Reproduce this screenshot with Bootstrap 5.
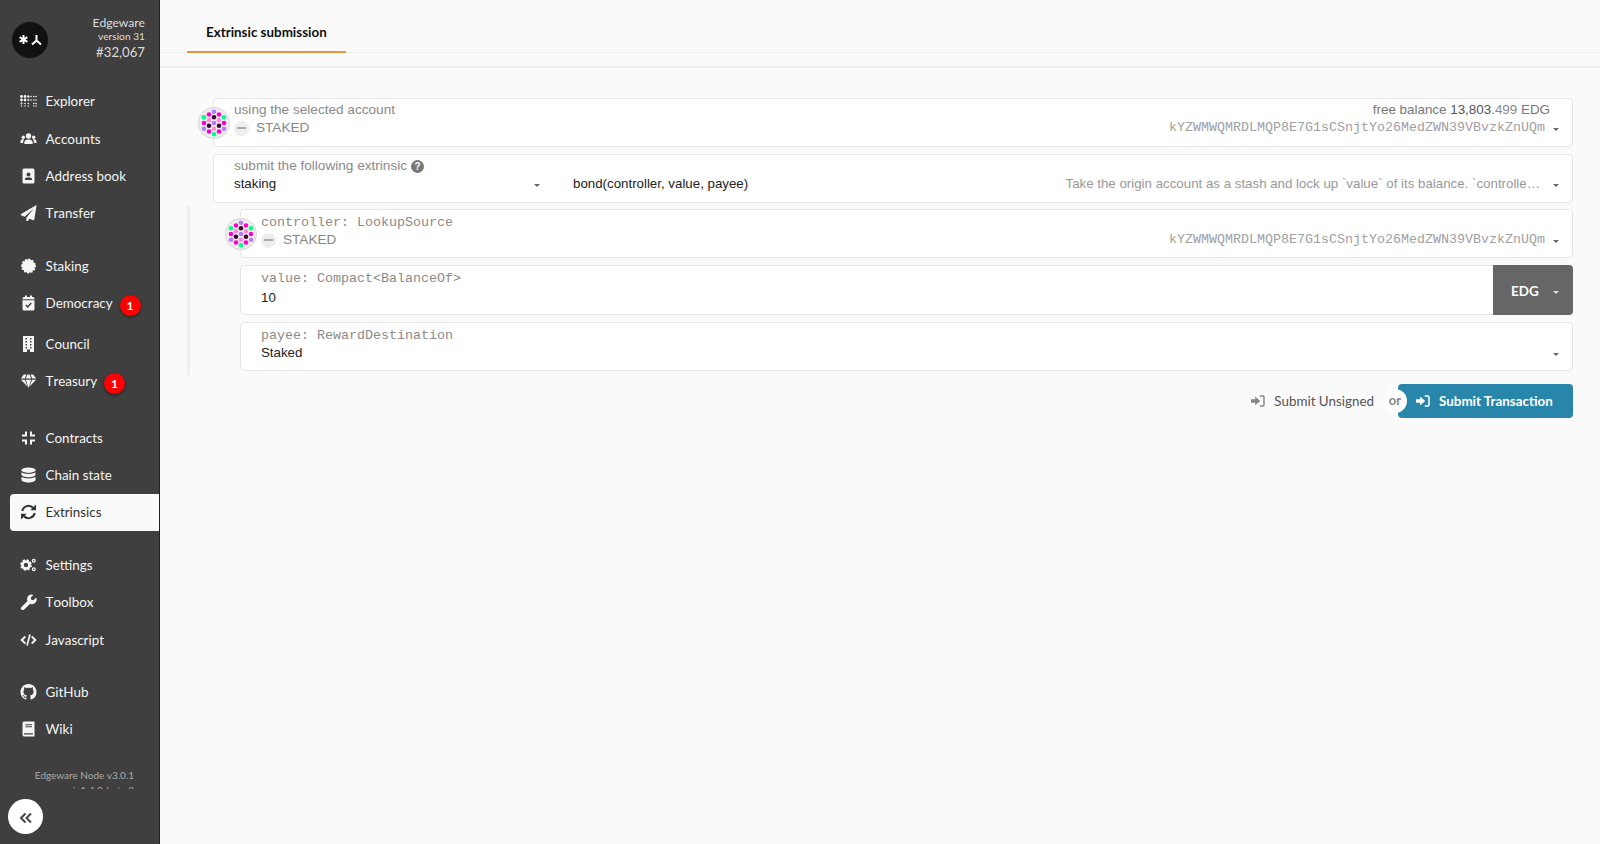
<!DOCTYPE html>
<html lang="en">
<head>
    <meta charset="UTF-8">
    <title>Extrinsics</title>
    <link href="https://cdn.jsdelivr.net/npm/bootstrap@5.3.0/dist/css/bootstrap.min.css" rel="stylesheet">
    <style>
        body {
            background: #fafafa;
            font-family: "Liberation Sans", Arial, sans-serif;
            font-size: 14px;
            color: #222;
        }
        .app-shell { height: 844px; overflow: hidden; }

        /* side menu */
        .side-menu {
            width: 160px;
            flex: 0 0 160px;
            background: #3f3f3f;
            border-right: 1px solid #222;
            font-family: Lato, sans-serif;
            color: #f5f5f5;
        }
        .side-scroll { height: 789px; overflow: hidden; }
        .chain-head { height: 82.6px; padding: 16px 14px 0 12px; }
        .chain-logo { width: 36px; height: 36px; margin-top: 6px; }
        .chain-info { line-height: 1; text-align: right; color: #ddd; }
        .chain-name { font-size: 12.2px; margin-top: 1px; }
        .chain-ver { font-size: 10.2px; margin-top: 2px; }
        .chain-block { font-size: 13.2px; margin-top: 5px; }
        .menu-link {
            height: 37.4px;
            padding: 0 0 0 20px;
            color: #f5f5f5;
            font-size: 13.4px;
            font-kerning: none;
            display: flex;
            align-items: center;
        }
        .menu-link:hover { color: #fff; }
        .menu-link.with-count { height: 41px; padding-bottom: 4px; }
        .menu-link.is-active {
            background: #fafafa;
            color: #333;
            margin-left: 10px;
            margin-right: -1px;
            padding-left: 10px;
            border-radius: 4px 0 0 4px;
        }
        .menu-gap { height: 15px; }
        .menu-icon { width: 17px; height: 16px; margin-right: 8.5px; flex: none; fill: currentColor; }
        .count-dot {
            width: 21px;
            height: 21px;
            margin: 4px 0 0 7px;
            border-radius: 50%;
            background: #f00;
            color: #fff;
            font-size: 12px;
            font-weight: 700;
            line-height: 21px;
            text-align: center;
            box-shadow: 0 1px 3px rgba(0,0,0,.5);
        }
        .node-info {
            padding: 20px 25px 0 0;
            font-size: 10px;
            line-height: 15px;
            text-align: right;
            color: #aaa;
        }
        .collapse-btn {
            width: 35px;
            height: 35px;
            margin: 10px 0 0 8px;
            padding: 0;
            border: 0;
            border-radius: 50%;
            background: #fff;
        }

        /* tab strip */
        .tab-strip { height: 53px; background: #fafafa; border-bottom: 1px solid #eee; padding-left: 27px; }
        .tab-item {
            width: 159px;
            height: 53px;
            padding: 23px 0 0 19px;
            border-bottom: 2px solid #f19135;
            font-family: Lato, sans-serif;
            font-size: 13.4px;
            font-weight: 700;
            line-height: 18px;
            color: #111;
        }
        .tab-sub { height: 15px; border-bottom: 2px solid #eee; }

        /* form */
        .form-area { padding: 30px 27px 0 27px; }
        .top-fields { margin-left: 26px; gap: 7px; }
        .nested-fields {
            margin-top: 3px;
            padding: 3px 0 4px 50px;
            border-left: 3px solid #f0f0f0;
            gap: 7px;
        }
        .field-box {
            position: relative;
            height: 49px;
            padding: 2px 13px 0 20px;
            background: #fff;
            border: 1px solid #e6e6e6;
            border-radius: 4px;
            line-height: 18px;
        }
        .field-box.tall { height: 50px; }
        .field-box.pad-five { padding-top: 5px; }
        .field-label { font-size: 13.6px; color: #8a8a8a; }
        .mono-label { font-family: "Liberation Mono", monospace; font-size: 13.33px; line-height: 16px; color: #8a8a8a; }
        .mono-addr { font-family: "Liberation Mono", monospace; font-size: 13.33px; color: #a0a0a0; }
        .field-value { font-size: 13.3px; color: #222; }
        .amount-line { margin-top: 2px; }
        .state-text { font-size: 13.6px; color: #888; margin-left: 7px; }
        .balance-line { font-size: 13.4px; color: #777; padding-right: 9px; }
        .balance-line b { font-weight: 400; color: #555; }
        .balance-line i { font-style: normal; color: #888; }
        .id-icon { position: absolute; left: -16px; top: 7.5px; width: 32px; height: 32px; }
        .minus-dot {
            width: 15px;
            height: 15px;
            border-radius: 50%;
            background: #eee;
            position: relative;
        }
        .minus-dot::after {
            content: "";
            position: absolute;
            left: 3px;
            top: 6.5px;
            width: 9px;
            height: 2px;
            background: #aaa;
        }
        .drop-tri {
            width: 0;
            height: 0;
            margin-top: 3px;
            border-left: 3.5px solid transparent;
            border-right: 3.5px solid transparent;
            border-top: 3.5px solid #666;
            flex: none;
        }
        .help-dot {
            width: 13px;
            height: 13px;
            margin-left: 4px;
            border-radius: 50%;
            background: #777;
            color: #fff;
            font-size: 10px;
            font-weight: 700;
            line-height: 13px;
            text-align: center;
        }
        .module-col { width: 306px; }
        .method-col { margin-left: 33px; }
        .desc-text { color: #999; font-size: 13.3px; margin-right: 13px; }
        .unit-btn {
            position: absolute;
            right: -1px;
            top: -1px;
            bottom: -1px;
            width: 80px;
            padding: 2px 0 0 18px;
            background: #666;
            border-radius: 0 4px 4px 0;
            color: #fff;
            font-family: Lato, sans-serif;
            font-weight: 700;
            font-size: 13.4px;
        }
        .unit-btn .drop-tri { margin-left: 14px; border-top-color: #ddd; }
        .action-row { margin-top: 9px; height: 34px; }
        .plain-action {
            font-family: Lato, sans-serif;
            font-size: 13.4px;
            color: #555;
            padding-right: 24px;
        }
        .plain-action .act-icon { color: #888; }
        .main-action {
            position: relative;
            width: 175px;
            height: 34px;
            padding: 0 0 0 18px;
            border: 0;
            border-radius: 4px;
            background: #2986ab;
            color: #fff;
            font-family: Lato, sans-serif;
            font-size: 13.4px;
            font-weight: 700;
        }
        .or-dot {
            position: absolute;
            left: -15px;
            top: 5px;
            width: 24px;
            height: 24px;
            border-radius: 50%;
            background: #fff;
            color: #888;
            font-size: 13px;
            font-weight: 700;
            line-height: 23px;
            text-align: center;
        }
        .act-icon { width: 14px; height: 14px; margin-right: 9px; fill: currentColor; flex: none; }
    </style>
</head>
<body>

<svg width="0" height="0" class="position-absolute">
    <defs>
        <symbol id="i-explorer" viewBox="0 0 17 12">
            <circle cx="1.500" cy="1.500" r="1.400"/><circle cx="5" cy="1.500" r="1.400"/><circle cx="1.500" cy="5" r="1.400"/><circle cx="5" cy="5" r="1.400"/><circle cx="1.500" cy="8.500" r="1"/><circle cx="5" cy="8.500" r=".8"/><circle cx="1.500" cy="11" r=".7"/><circle cx="5" cy="11" r=".7"/>
            <circle cx="8.300" cy="1.500" r="1.200"/><circle cx="11" cy="1.500" r=".8"/><circle cx="8.300" cy="5" r="1"/><circle cx="11" cy="5" r=".8"/><circle cx="8.300" cy="8.500" r=".8"/><circle cx="8.300" cy="11" r=".7"/>
            <circle cx="13.800" cy="1.500" r=".8"/><circle cx="16" cy="1.500" r=".8"/><circle cx="13.800" cy="5" r=".8"/><circle cx="16" cy="5" r=".8"/><circle cx="13.800" cy="8.500" r=".8"/><circle cx="16" cy="8.500" r=".8"/><circle cx="13.800" cy="11" r=".7"/><circle cx="16" cy="11" r=".7"/>
        </symbol>
        <symbol id="i-users" viewBox="0 0 16 16">
            <circle cx="8" cy="5" r="2.700"/><circle cx="2.800" cy="6.200" r="1.700"/><circle cx="13.200" cy="6.200" r="1.700"/>
            <path d="M3.800 13v-1.300C3.800 9.600 5.400 8.400 8 8.400s4.200 1.200 4.200 3.300V13z"/>
            <path d="M0 12v-1.500C0 9 1 8.300 2.500 8.300c.6 0 1 .1 1.300.3-.8.7-1.100 1.700-1.200 3.400z"/>
            <path d="M16 12v-1.500C16 9 15 8.300 13.500 8.300c-.6 0-1 .1-1.300.3.8.7 1.100 1.700 1.200 3.400z"/>
        </symbol>
        <symbol id="i-book-addr" viewBox="0 0 16 16">
            <path fill-rule="evenodd" d="M3.500.5h9A1.500 1.500 0 0 1 14 2v12a1.500 1.500 0 0 1-1.500 1.500h-9A1.500 1.500 0 0 1 2 14V2A1.500 1.500 0 0 1 3.500.5zM8 4.500a2 2 0 1 0 0 4 2 2 0 0 0 0-4zM4.500 12h7v-1c0-1-1-1.600-2-1.600h-3c-1 0-2 .6-2 1.600z"/>
        </symbol>
        <symbol id="i-plane" viewBox="0 0 16 16">
            <path d="M15.500.3.600 8.900c-.6.3-.5 1.200.1 1.400l3.400 1.400 9.200-8.100-7.500 9.200v2.900c0 .7.9 1 1.300.5l2-2.500 3.600 1.500c.5.2 1-.1 1.100-.6L16 .8c.1-.4-.2-.7-.5-.5z"/>
        </symbol>
        <symbol id="i-cert" viewBox="0 0 16 16">
            <circle cx="8" cy="8" r="6" stroke="currentColor" stroke-width="3" stroke-linecap="round" stroke-dasharray="0 3.140"/>
        </symbol>
        <symbol id="i-calendar" viewBox="0 0 16 16">
            <path d="M2 5.200h12v8.800a1.500 1.500 0 0 1-1.500 1.500h-9A1.500 1.500 0 0 1 2 14z"/>
            <path d="M3.500 2h1V.5h2V2h3V.5h2V2h1A1.500 1.500 0 0 1 14 3.500v.7H2v-.7A1.500 1.500 0 0 1 3.500 2z"/>
            <polyline points="5.300,10 7.200,11.900 10.800,8" fill="none" stroke="#3f3f3f" stroke-width="1.500"/>
        </symbol>
        <symbol id="i-building" viewBox="0 0 16 16">
            <path fill-rule="evenodd" d="M2.500 0h11v16H9.500v-2.500h-3V16h-4zM5 2v1.500h1.500V2zM9.500 2v1.500H11V2zM5 5v1.500h1.500V5zM9.500 5v1.500H11V5zM5 8v1.500h1.500V8zM9.500 8v1.500H11V8zM5 11v1.500h1.500V11zM9.500 11v1.500H11V11z"/>
        </symbol>
        <symbol id="i-gem" viewBox="0 0 16 16">
            <path d="M3.300 1.500h2.700L4.300 5.500H.4zM7 1.500h2L10.700 5.500H5.300zM10 1.500h2.700l2.900 4h-3.900zM.4 6.700h3.900l2.900 7zM5.300 6.700h5.400L8 15zM11.700 6.700h3.900l-6.800 7z"/>
        </symbol>
        <symbol id="i-compress" viewBox="0 0 16 16">
            <g fill="none" stroke="currentColor" stroke-width="2">
                <polyline points="1.500,5.500 5.500,5.500 5.500,1.500"/>
                <polyline points="10.500,1.500 10.500,5.500 14.500,5.500"/>
                <polyline points="1.500,10.500 5.500,10.500 5.500,14.500"/>
                <polyline points="10.500,14.500 10.500,10.500 14.500,10.500"/>
            </g>
        </symbol>
        <symbol id="i-database" viewBox="0 0 16 16">
            <ellipse cx="8" cy="3.200" rx="7" ry="2.700"/>
            <path d="M1 5.200v2.300C1 9 4.100 10.200 8 10.200s7-1.200 7-2.700V5.200c-1.500 1.100-4.100 1.700-7 1.700S2.500 6.300 1 5.200z"/>
            <path d="M1 9.800v2.900C1 14.200 4.100 15.500 8 15.500s7-1.300 7-2.800V9.800c-1.500 1.100-4.100 1.700-7 1.700s-5.500-.6-7-1.700z"/>
        </symbol>
        <symbol id="i-sync" viewBox="0 0 16 16">
            <path d="M1.800 7A6.300 6.300 0 0 1 12.700 4" fill="none" stroke="currentColor" stroke-width="2"/>
            <polygon points="9.800,6.200 15.500,6.200 15.500,.5"/>
            <path d="M14.200 9A6.300 6.300 0 0 1 3.300 12" fill="none" stroke="currentColor" stroke-width="2"/>
            <polygon points="6.200,9.800 .5,9.800 .5,15.500"/>
        </symbol>
        <symbol id="i-cogs" viewBox="0 0 16 16">
            <circle cx="5.500" cy="8" r="3.500" fill="none" stroke="currentColor" stroke-width="2.600"/>
            <circle cx="5.500" cy="8" r="4.900" fill="none" stroke="currentColor" stroke-width="1.800" stroke-dasharray="2.200 1.650"/>
            <circle cx="13.300" cy="3.800" r="1.400" fill="none" stroke="currentColor" stroke-width="1.300"/>
            <circle cx="13.300" cy="12.200" r="1.400" fill="none" stroke="currentColor" stroke-width="1.300"/>
        </symbol>
        <symbol id="i-wrench" viewBox="0 0 16 16">
            <path d="M15.600 3.600 13 6.200l-2.300-.4-.4-2.300L12.900.9A4.500 4.500 0 0 0 7 6.900L1 12.900a1.900 1.900 0 0 0 2.700 2.700L9.600 9.700a4.500 4.500 0 0 0 6-6.100z"/>
        </symbol>
        <symbol id="i-code" viewBox="0 0 16 16">
            <polyline points="4.800,4.500 1.200,8 4.800,11.500" fill="none" stroke="currentColor" stroke-width="1.900"/>
            <polyline points="11.200,4.500 14.800,8 11.200,11.500" fill="none" stroke="currentColor" stroke-width="1.900"/>
            <line x1="9.500" y1="2.500" x2="6.500" y2="13.500" stroke="currentColor" stroke-width="1.700"/>
        </symbol>
        <symbol id="i-github" viewBox="0 0 16 16">
            <path d="M8 0C3.580 0 0 3.580 0 8c0 3.540 2.290 6.530 5.470 7.590.4.070.55-.17.55-.38 0-.19-.01-.82-.01-1.490-2.010.37-2.530-.49-2.690-.94-.09-.23-.48-.94-.82-1.130-.28-.15-.68-.52-.01-.53.63-.01 1.080.58 1.230.82.72 1.210 1.870.87 2.330.66.070-.52.28-.87.51-1.070-1.780-.2-3.640-.89-3.640-3.950 0-.87.31-1.590.82-2.150-.08-.2-.36-1.020.08-2.120 0 0 .67-.21 2.200.82.64-.18 1.320-.27 2-.27.68 0 1.360.09 2 .27 1.530-1.040 2.200-.82 2.200-.82.44 1.100.16 1.920.08 2.120.51.56.82 1.270.82 2.150 0 3.070-1.870 3.750-3.650 3.950.29.25.54.73.54 1.480 0 1.070-.01 1.930-.01 2.200 0 .21.15.46.55.38A8.013 8.013 0 0 0 16 8c0-4.420-3.580-8-8-8z"/>
        </symbol>
        <symbol id="i-wiki" viewBox="0 0 16 16">
            <path fill-rule="evenodd" d="M3.500.5H14v15H3.500A1.800 1.800 0 0 1 2 13.800V2.200A1.800 1.800 0 0 1 3.500.5zM4.800 3.200v1h6.700v-1zM4.800 5.300v1h6.700v-1zM3.600 12.200v1.300h8.800v-1.300z"/>
        </symbol>
        <symbol id="i-signin" viewBox="0 0 16 16">
            <path d="M0 6h4.800V2.800L10.500 8l-5.700 5.200V10H0z"/>
            <path d="M10 1.500h3.500a2.200 2.200 0 0 1 2.200 2.200v8.600a2.200 2.200 0 0 1-2.200 2.200H10v-1.700h3.400a.7.700 0 0 0 .6-.6V3.800a.7.700 0 0 0-.6-.6H10z"/>
        </symbol>
        <symbol id="i-identity" viewBox="0 0 32 32">
            <circle cx="16" cy="16" r="15.500" fill="#eee" stroke="#d4d4d4"/>
            <circle cx="16" cy="4.700" r="2.300" fill="#b57aff"/>
            <circle cx="11" cy="7.500" r="2.300" fill="#f0c"/><circle cx="21" cy="7.500" r="2.300" fill="#f0c"/>
            <circle cx="6" cy="10.300" r="2.300" fill="#0f8"/><circle cx="16" cy="10.300" r="2.300" fill="#3a0a30"/><circle cx="26" cy="10.300" r="2.300" fill="#0f8"/>
            <circle cx="11" cy="13.200" r="2.300" fill="#ff88dd"/><circle cx="21" cy="13.200" r="2.300" fill="#ff88dd"/>
            <circle cx="6" cy="16" r="2.300" fill="#f0c"/><circle cx="16" cy="16" r="2.300" fill="#b57aff"/><circle cx="26" cy="16" r="2.300" fill="#f0c"/>
            <circle cx="11" cy="18.800" r="2.300" fill="#3a0a30"/><circle cx="21" cy="18.800" r="2.300" fill="#3a0a30"/>
            <circle cx="6" cy="21.700" r="2.300" fill="#b57aff"/><circle cx="16" cy="21.700" r="2.300" fill="#ff88dd"/><circle cx="26" cy="21.700" r="2.300" fill="#b57aff"/>
            <circle cx="11" cy="24.500" r="2.300" fill="#f0c"/><circle cx="21" cy="24.500" r="2.300" fill="#f0c"/>
            <circle cx="16" cy="27.300" r="2.300" fill="#0f8"/>
        </symbol>
    </defs>
</svg>

<div class="app-shell d-flex">
    <aside class="side-menu d-flex flex-column">
        <div class="side-scroll">
            <div class="chain-head d-flex justify-content-between">
                <svg class="chain-logo" viewBox="0 0 36 36">
                    <circle cx="18" cy="18" r="18" fill="#111"/>
                    <g stroke="#fff" stroke-width="2" fill="none">
                        <path d="M11.500 13v9M7.600 15.200l7.800 4.600M15.400 15.200l-7.800 4.600"/>
                        <path d="M24.500 13v5.500L20 22.500M24.500 18.500l4.500 4"/>
                    </g>
                </svg>
                <div class="chain-info">
                    <div class="chain-name">Edgeware</div>
                    <div class="chain-ver">version 31</div>
                    <div class="chain-block">#32,067</div>
                </div>
            </div>

            <nav class="nav flex-column">
                <a class="nav-link menu-link" href="#"><svg class="menu-icon"><use href="#i-explorer"/></svg>Explorer</a>
                <a class="nav-link menu-link" href="#"><svg class="menu-icon"><use href="#i-users"/></svg>Accounts</a>
                <a class="nav-link menu-link" href="#"><svg class="menu-icon"><use href="#i-book-addr"/></svg>Address book</a>
                <a class="nav-link menu-link" href="#"><svg class="menu-icon"><use href="#i-plane"/></svg>Transfer</a>
                <div class="menu-gap"></div>
                <a class="nav-link menu-link" href="#"><svg class="menu-icon"><use href="#i-cert"/></svg>Staking</a>
                <a class="nav-link menu-link with-count" href="#"><svg class="menu-icon"><use href="#i-calendar"/></svg>Democracy<span class="count-dot">1</span></a>
                <a class="nav-link menu-link" href="#"><svg class="menu-icon"><use href="#i-building"/></svg>Council</a>
                <a class="nav-link menu-link with-count" href="#"><svg class="menu-icon"><use href="#i-gem"/></svg>Treasury<span class="count-dot">1</span></a>
                <div class="menu-gap"></div>
                <a class="nav-link menu-link" href="#"><svg class="menu-icon"><use href="#i-compress"/></svg>Contracts</a>
                <a class="nav-link menu-link" href="#"><svg class="menu-icon"><use href="#i-database"/></svg>Chain state</a>
                <a class="nav-link menu-link is-active" href="#"><svg class="menu-icon"><use href="#i-sync"/></svg>Extrinsics</a>
                <div class="menu-gap"></div>
                <a class="nav-link menu-link" href="#"><svg class="menu-icon"><use href="#i-cogs"/></svg>Settings</a>
                <a class="nav-link menu-link" href="#"><svg class="menu-icon"><use href="#i-wrench"/></svg>Toolbox</a>
                <a class="nav-link menu-link" href="#"><svg class="menu-icon"><use href="#i-code"/></svg>Javascript</a>
                <div class="menu-gap"></div>
                <a class="nav-link menu-link" href="#"><svg class="menu-icon"><use href="#i-github"/></svg>GitHub</a>
                <a class="nav-link menu-link" href="#"><svg class="menu-icon"><use href="#i-wiki"/></svg>Wiki</a>
            </nav>

            <div class="node-info">
                <div>Edgeware Node v3.0.1</div>
                <div>apiv1.4.0-beta.8</div>
            </div>
        </div>
        <button class="collapse-btn" type="button" aria-label="Collapse">
            <svg width="14" height="12" viewBox="0 0 14 12" fill="none" stroke="#444" stroke-width="2"><path d="M6.500 1.500 2 6l4.500 4.500M12 1.500 7.500 6l4.500 4.500"/></svg>
        </button>
    </aside>

    <main class="flex-grow-1">
        <div class="tab-strip">
            <div class="tab-item">Extrinsic submission</div>
        </div>
        <div class="tab-sub"></div>

        <div class="form-area">
            <div class="top-fields d-flex flex-column">
                <div class="field-box">
                    <svg class="id-icon"><use href="#i-identity"/></svg>
                    <div class="d-flex justify-content-between">
                        <span class="field-label">using the selected account</span>
                        <span class="balance-line">free balance <b>13,803<i>.499</i></b> EDG</span>
                    </div>
                    <div class="d-flex align-items-center">
                        <span class="minus-dot"></span>
                        <span class="state-text">STAKED</span>
                        <span class="mono-addr ms-auto me-2">kYZWMWQMRDLMQP8E7G1sCSnjtYo26MedZWN39VBvzkZnUQm</span>
                        <span class="drop-tri"></span>
                    </div>
                </div>
                <div class="field-box">
                    <div class="d-flex align-items-center">
                        <span class="field-label">submit the following extrinsic</span>
                        <span class="help-dot">?</span>
                    </div>
                    <div class="d-flex align-items-center">
                        <div class="module-col d-flex align-items-center justify-content-between">
                            <span class="field-value">staking</span>
                            <span class="drop-tri"></span>
                        </div>
                        <span class="field-value method-col">bond(controller, value, payee)</span>
                        <span class="desc-text ms-auto">Take the origin account as a stash and lock up `value` of its balance. `controlle…</span>
                        <span class="drop-tri"></span>
                    </div>
                </div>
            </div>

            <div class="nested-fields d-flex flex-column">
                <div class="field-box pad-five">
                    <svg class="id-icon"><use href="#i-identity"/></svg>
                    <div class="mono-label">controller: LookupSource</div>
                    <div class="d-flex align-items-center">
                        <span class="minus-dot"></span>
                        <span class="state-text">STAKED</span>
                        <span class="mono-addr ms-auto me-2">kYZWMWQMRDLMQP8E7G1sCSnjtYo26MedZWN39VBvzkZnUQm</span>
                        <span class="drop-tri"></span>
                    </div>
                </div>
                <div class="field-box tall pad-five">
                    <div class="mono-label">value: Compact&lt;BalanceOf&gt;</div>
                    <div class="field-value amount-line">10</div>
                    <div class="unit-btn d-flex align-items-center">EDG<span class="drop-tri"></span></div>
                </div>
                <div class="field-box pad-five">
                    <div class="mono-label">payee: RewardDestination</div>
                    <div class="d-flex align-items-center justify-content-between">
                        <span class="field-value">Staked</span>
                        <span class="drop-tri"></span>
                    </div>
                </div>
            </div>

            <div class="action-row d-flex justify-content-end align-items-center">
                <span class="plain-action d-flex align-items-center"><svg class="act-icon"><use href="#i-signin"/></svg>Submit Unsigned</span>
                <button class="main-action d-flex align-items-center" type="button">
                    <span class="or-dot">or</span>
                    <svg class="act-icon"><use href="#i-signin"/></svg>Submit Transaction
                </button>
            </div>
        </div>
    </main>
</div>

<script src="https://cdn.jsdelivr.net/npm/bootstrap@5.3.0/dist/js/bootstrap.bundle.min.js"></script>
</body>
</html>
